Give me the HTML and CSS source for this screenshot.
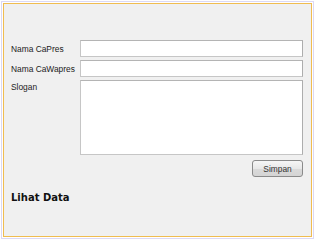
FILE: index.html
```html
<!DOCTYPE html>
<html>
<head>
	<meta charset="utf-8">
	<title>Form CaPres</title>
	<link rel="stylesheet" href="styles.css">
</head>
<body>
	<div class="panel">
		<form class="form">
			<label class="lbl">Nama CaPres</label>
			<input class="field" type="text">
			<label class="lbl">Nama CaWapres</label>
			<input class="field" type="text">
			<label class="lbl lbl-top">Slogan</label>
			<textarea class="field area"></textarea>
			<div class="actions">
				<button type="button" class="btn">Simpan</button>
			</div>
		</form>
		<div class="title">Lihat Data</div>
	</div>
</body>
</html>
```

FILE: styles.css
```css
html, body{margin: 0; background: #fff;}

.panel{margin: 3px;
		width: 307px;
		height: 232px;
		border: 1px solid #f0bc50;
		background: #f0f0f0;
		box-shadow: 0 0 0 1px #fff, 0 0 0 2px #dcd8f4;
		font-family: 'Liberation Sans', Arial, sans-serif;
		color: #222;}

.form{display: grid;
		grid-template-columns: 69px 1fr;
		row-gap: 3px;
		padding: 36px 8px 0 7px;}

.lbl{font-size: 8.4px;
		display: flex;
		align-items: center;
		height: 17px;}
.lbl-top{align-items: flex-start; height: auto; padding-top: 2px;}

.field{box-sizing: border-box;
		height: 17px;
		margin: 0;
		border: 1px solid #c6c6c6;
		border-top-color: #b4b4b4;
		border-right-color: #adadad;
		background: #fff;
		outline: none;}
.area{height: 75px; resize: none;}

.actions{grid-column: 2;
		display: flex;
		justify-content: flex-end;
		padding-top: 2px;}

.btn{box-sizing: border-box;
		width: 51px;
		height: 17px;
		padding: 0;
		font-family: 'Liberation Sans', Arial, sans-serif;
		font-size: 8.4px;
		color: #333;
		border: 1px solid #8a8a8a;
		border-radius: 3px;
		background: linear-gradient(#f6f6f6, #e8e8e8 50%, #dadada 51%, #d4d4d4);}

.title{font-family: 'DejaVu Sans', sans-serif;
		font-weight: bold;
		font-size: 10px;
		color: #111;
		padding: 15px 0 0 7px;}
```
